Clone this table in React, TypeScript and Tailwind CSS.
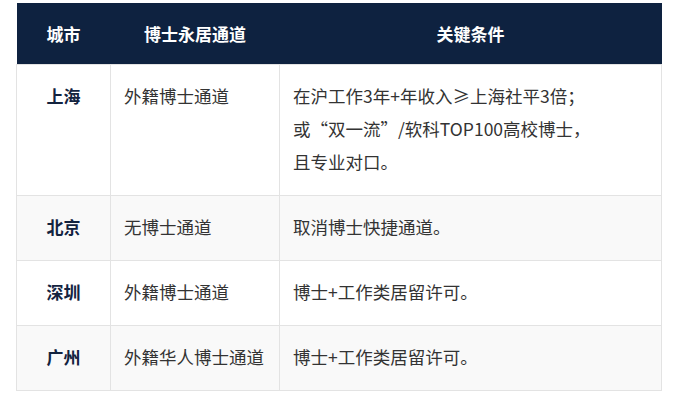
const rows = [
  {
    city: '上海',
    channel: '外籍博士通道',
    condition: ['在沪工作3年+年收入≥上海社平3倍；', '或“双一流”/软科TOP100高校博士，', '且专业对口。'],
  },
  { city: '北京', channel: '无博士通道', condition: ['取消博士快捷通道。'] },
  { city: '深圳', channel: '外籍博士通道', condition: ['博士+工作类居留许可。'] },
  { city: '广州', channel: '外籍华人博士通道', condition: ['博士+工作类居留许可。'] },
];

export default function App() {
  return (
    <div className="w-[678px] h-[395px] bg-white pt-[3px] pl-4 font-['Microsoft_YaHei','Noto_Sans_CJK_SC',sans-serif]">
      <table className="w-[645px] border-collapse table-fixed text-[17.5px] leading-[33px]">
        <colgroup>
          <col className="w-[94px]" />
          <col className="w-[169px]" />
          <col className="w-[382px]" />
        </colgroup>
        <thead>
          <tr className="bg-[#0e2240] text-white h-[61px] text-[17px]">
            <th className="font-bold text-center px-3">城市</th>
            <th className="font-bold text-center px-3">博士永居通道</th>
            <th className="font-bold text-center px-3">关键条件</th>
          </tr>
        </thead>
        <tbody>
          {rows.map((row, i) => (
            <tr key={row.city} className={i % 2 === 1 ? 'bg-[#f9f9f9]' : 'bg-white'}>
              <td className="border border-[#e3e3e3] align-top text-center font-bold text-[#13233f] text-[17px] pt-[14px] pb-[17px] px-3">{row.city}</td>
              <td className="border border-[#e3e3e3] align-top text-[#333] whitespace-nowrap pt-[14px] pb-[17px] px-[13px]">{row.channel}</td>
              <td className="border border-[#e3e3e3] align-top text-[#333] pt-[14px] pb-[17px] px-[13px]">
                {row.condition.map((line) => (
                  <div key={line}>{line}</div>
                ))}
              </td>
            </tr>
          ))}
        </tbody>
      </table>
    </div>
  );
}
